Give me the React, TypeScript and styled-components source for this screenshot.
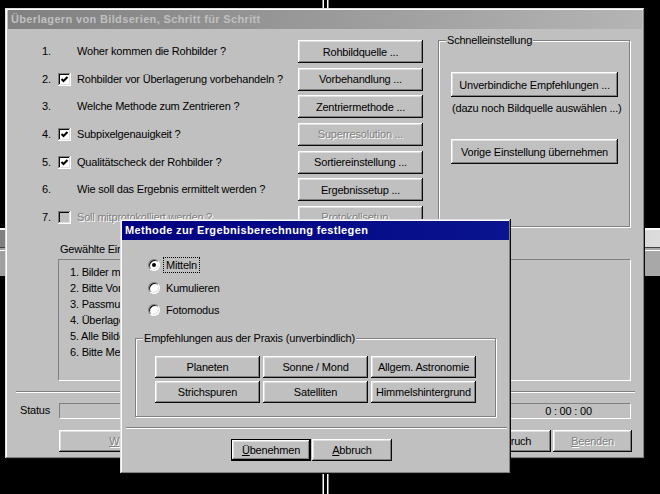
import React from "react";
import styled, { createGlobalStyle, css } from "styled-components";

const GlobalStyle = createGlobalStyle`
  body {
    margin: 0;
    background: #000;
    font-family: "Liberation Sans", Arial, sans-serif;
    font-size: 11px;
    letter-spacing: -0.2px;
    color: #000;
  }
`;

const steps = [
  { num: "1.", label: "Woher kommen die Rohbilder ?", button: "Rohbildquelle ..." },
  { num: "2.", check: true, label: "Rohbilder vor Überlagerung vorbehandeln ?", button: "Vorbehandlung ..." },
  { num: "3.", label: "Welche Methode zum Zentrieren ?", button: "Zentriermethode ..." },
  { num: "4.", check: true, label: "Subpixelgenauigkeit ?", button: "Superresolution ...", buttonOff: true },
  { num: "5.", check: true, label: "Qualitätscheck der Rohbilder ?", button: "Sortiereinstellung ..." },
  { num: "6.", label: "Wie soll das Ergebnis ermittelt werden ?", button: "Ergebnissetup ..." },
  { num: "7.", check: false, off: true, label: "Soll mitprotokolliert werden ?", button: "Protokollsetup ...", buttonOff: true },
];

const chosen = [
  "1. Bilder manuell auswählen",
  "2. Bitte Vorbehandlung festlegen",
  "3. Passmuster im ersten Bild markieren",
  "4. Überlagerung starten",
  "5. Alle Bilder werden zentriert",
  "6. Bitte Methode zur Ergebnisberechnung wählen",
];

const presets = [
  "Planeten",
  "Sonne / Mond",
  "Allgem. Astronomie",
  "Strichspuren",
  "Satelliten",
  "Himmelshintergrund",
];

const App = () => {
  return (
    <Desktop>
      <GlobalStyle />
      <BackSplit />
      <BackWindow>
        <BackTitle />
        <BackRule />
      </BackWindow>

      <MainWindow>
        <TitleBar $active={false}>Überlagern von Bildserien, Schritt für Schritt</TitleBar>
        <MainBody>
          <TopSection>
            <StepGrid>
              {steps.map((s) => (
                <React.Fragment key={s.num}>
                  <StepNum>{s.num}</StepNum>
                  <div>
                    {s.check !== undefined && (
                      <CheckBox $disabled={s.off}>
                        {s.check && (
                          <svg width="9" height="9" viewBox="0 0 9 9">
                            <polyline
                              points="1.5,4 3.5,6 7.5,2"
                              fill="none"
                              stroke="#000"
                              strokeWidth="2"
                            />
                          </svg>
                        )}
                      </CheckBox>
                    )}
                  </div>
                  <StepLabel $disabled={s.off}>{s.label}</StepLabel>
                  <Button $disabled={s.buttonOff}>{s.button}</Button>
                </React.Fragment>
              ))}
            </StepGrid>
            <QuickGroup>
              <GroupCaption>Schnelleinstellung</GroupCaption>
              <WideButton>Unverbindiche Empfehlungen ...</WideButton>
              <Hint>(dazu noch Bildquelle auswählen ...)</Hint>
              <WideButton $spaced>Vorige Einstellung übernehmen</WideButton>
            </QuickGroup>
          </TopSection>

          <ChosenLabel>Gewählte Einstellungen</ChosenLabel>
          <ChosenList>
            {chosen.map((c) => (
              <div key={c}>{c}</div>
            ))}
          </ChosenList>

          <Separator $width={619} $left={8} />

          <StatusRow>
            <StatusLabel>Status</StatusLabel>
            <SunkenField $width={441} />
            <SunkenField $width={125} $gap={6}>0 : 00 : 00</SunkenField>
          </StatusRow>

          <MainButtons>
            <Button $disabled $w={146}>
              <u>W</u>eiter &gt;&gt;
            </Button>
            <ButtonPair>
              <Button $w={79}>
                <u>A</u>bbruch
              </Button>
              <Button $disabled $w={79}>
                <u>B</u>eenden
              </Button>
            </ButtonPair>
          </MainButtons>
        </MainBody>
      </MainWindow>

      <Dialog>
        <TitleBar $active>Methode zur Ergebnisberechnung festlegen</TitleBar>
        <DialogBody>
          <RadioList>
            <RadioRow>
              <Radio $checked />
              <RadioLabel $focused>Mitteln</RadioLabel>
            </RadioRow>
            <RadioRow>
              <Radio />
              <RadioLabel>Kumulieren</RadioLabel>
            </RadioRow>
            <RadioRow>
              <Radio />
              <RadioLabel>Fotomodus</RadioLabel>
            </RadioRow>
          </RadioList>

          <PresetGroup>
            <GroupCaption>Empfehlungen aus der Praxis (unverbindlich)</GroupCaption>
            <PresetGrid>
              {presets.map((p) => (
                <Button key={p}>{p}</Button>
              ))}
            </PresetGrid>
          </PresetGroup>

          <Separator $width={381} $left={4} />

          <DialogButtons>
            <Button $default $w={80}>
              <u>Ü</u>benehmen
            </Button>
            <Button $w={80}>
              <u>A</u>bbruch
            </Button>
          </DialogButtons>
        </DialogBody>
      </Dialog>
    </Desktop>
  );
};

export default App;

const windowBevel = css`
  background: #c0c0c0;
  box-shadow: inset -1px -1px #0a0a0a, inset 1px 1px #dfdfdf,
    inset -2px -2px #808080, inset 2px 2px #ffffff;
  box-sizing: border-box;
`;

const Desktop = styled.div`
  position: relative;
  width: 660px;
  height: 494px;
  overflow: hidden;
  background: #000;
`;

const BackSplit = styled.div`
  position: absolute;
  left: 322px;
  top: 0;
  width: 8px;
  height: 494px;
  background: linear-gradient(
    90deg,
    #808080 0 1px,
    #ffffff 1px 2px,
    #000 2px 5px,
    #ffffff 5px 6px,
    #808080 6px 7px,
    #000 7px
  );
`;

const BackWindow = styled.div`
  position: absolute;
  left: 0;
  right: 0;
  top: 228px;
  height: 48px;
  border-top: 2px solid #ffffff;
  background: linear-gradient(90deg, #a0a0a0, #a8a8a8);
  box-sizing: border-box;
`;

const BackTitle = styled.div`
  height: 17px;
  background: linear-gradient(90deg, #808080, #dcdcdc);
`;

const BackRule = styled.div`
  height: 2px;
  border-top: 1px solid #404040;
  border-bottom: 1px solid #ffffff;
`;

const MainWindow = styled.div`
  ${windowBevel};
  position: absolute;
  left: 5px;
  top: 8px;
  width: 640px;
  height: 451px;
  padding: 2px 3px 3px;
`;

const Dialog = styled.div`
  ${windowBevel};
  position: absolute;
  left: 120px;
  top: 219px;
  width: 391px;
  height: 255px;
  padding: 2px;
`;

const TitleBar = styled.div<{ $active: boolean }>`
  height: 19px;
  line-height: 19px;
  padding-left: 3px;
  font-weight: bold;
  font-size: 11px;
  letter-spacing: 0.35px;
  white-space: nowrap;
  overflow: hidden;
  color: ${(p) => (p.$active ? "#ffffff" : "#c0c0c0")};
  background: ${(p) =>
    p.$active
      ? "linear-gradient(90deg, #000080, #0a148e)"
      : "linear-gradient(90deg, #808080, #b4b4b4)"};
`;

const MainBody = styled.div`
  display: flex;
  flex-direction: column;
  padding-top: 11px;
`;

const TopSection = styled.div`
  display: flex;
  align-items: flex-start;
  padding-left: 34px;
`;

const StepGrid = styled.div`
  display: grid;
  grid-template-columns: 16px 19px 221px 125px;
  grid-auto-rows: 23px;
  row-gap: 4.67px;
  align-items: center;
`;

const StepNum = styled.div`
  line-height: 13px;
`;

const StepLabel = styled.div<{ $disabled?: boolean }>`
  line-height: 13px;
  white-space: nowrap;
  color: ${(p) => (p.$disabled ? "#808080" : "#000")};
  text-shadow: ${(p) => (p.$disabled ? "1px 1px 0 #ffffff" : "none")};
`;

const CheckBox = styled.span<{ $disabled?: boolean }>`
  display: flex;
  align-items: center;
  justify-content: center;
  width: 13px;
  height: 13px;
  box-sizing: border-box;
  background: ${(p) => (p.$disabled ? "#c0c0c0" : "#ffffff")};
  box-shadow: inset -1px -1px #ffffff, inset 1px 1px #808080,
    inset -2px -2px #dfdfdf, inset 2px 2px #0a0a0a;
`;

const Button = styled.button<{ $disabled?: boolean; $default?: boolean; $w?: number }>`
  height: 100%;
  width: ${(p) => (p.$w ? `${p.$w}px` : "100%")};
  padding: 0;
  border: none;
  background: #c0c0c0;
  font-family: inherit;
  font-size: 11px;
  letter-spacing: inherit;
  white-space: nowrap;
  color: ${(p) => (p.$disabled ? "#808080" : "#000")};
  text-shadow: ${(p) => (p.$disabled ? "1px 1px 0 #ffffff" : "none")};
  box-shadow: ${(p) =>
    p.$default
      ? "inset 0 0 0 1px #000, inset -2px -2px #000, inset 2px 2px #ffffff, inset -3px -3px #808080, inset 3px 3px #dfdfdf"
      : "inset -1px -1px #0a0a0a, inset 1px 1px #ffffff, inset -2px -2px #808080, inset 2px 2px #dfdfdf"};
`;

const Group = styled.div`
  position: relative;
  box-sizing: border-box;
  border: 1px solid #808080;
  box-shadow: inset 1px 1px #ffffff, 1px 1px #ffffff;
`;

const GroupCaption = styled.span`
  position: absolute;
  top: -7px;
  left: 7px;
  padding: 0 1px;
  line-height: 13px;
  background: #c0c0c0;
  white-space: nowrap;
`;

const QuickGroup = styled(Group)`
  width: 192px;
  height: 187px;
  margin-left: 15px;
  display: flex;
  flex-direction: column;
  padding: 31px 0 0 12px;
`;

const WideButton = styled(Button)<{ $spaced?: boolean }>`
  width: 167px;
  height: 25px;
  flex: none;
  margin-top: ${(p) => (p.$spaced ? "24px" : "0")};
`;

const Hint = styled.div`
  margin-top: 5px;
  padding-left: 1px;
  line-height: 13px;
  white-space: nowrap;
`;

const ChosenLabel = styled.div`
  margin: 14px 0 0 52px;
  line-height: 13px;
`;

const ChosenList = styled.div`
  margin: 3px 0 0 50px;
  width: 573px;
  height: 122px;
  box-sizing: border-box;
  border: 1px solid;
  border-color: #808080 #ffffff #ffffff #808080;
  padding: 4px 0 0 11px;
  line-height: 16px;
  overflow: hidden;
`;

const Separator = styled.div<{ $width: number; $left: number }>`
  width: ${(p) => p.$width}px;
  margin: 10px 0 0 ${(p) => p.$left}px;
  border-top: 1px solid #808080;
  border-bottom: 1px solid #ffffff;
`;

const StatusRow = styled.div`
  display: flex;
  align-items: center;
  height: 16px;
  margin-top: 10px;
  padding-left: 12px;
`;

const StatusLabel = styled.div`
  width: 39px;
  line-height: 13px;
`;

const SunkenField = styled.div<{ $width: number; $gap?: number }>`
  width: ${(p) => p.$width}px;
  height: 16px;
  margin-left: ${(p) => p.$gap ?? 0}px;
  box-sizing: border-box;
  border: 1px solid;
  border-color: #808080 #ffffff #ffffff #808080;
  text-align: center;
  line-height: 14px;
`;

const MainButtons = styled.div`
  display: flex;
  justify-content: space-between;
  height: 22px;
  margin-top: 11px;
  padding: 0 10px 0 51px;
`;

const ButtonPair = styled.div`
  display: flex;
  gap: 2px;
`;

const DialogBody = styled.div`
  display: flex;
  flex-direction: column;
  padding-top: 17px;
`;

const RadioList = styled.div`
  display: flex;
  flex-direction: column;
  gap: 6.5px;
  margin-left: 26px;
`;

const RadioRow = styled.div`
  display: flex;
  align-items: center;
  height: 16px;
`;

const Radio = styled.span<{ $checked?: boolean }>`
  position: relative;
  width: 12px;
  height: 12px;
  box-sizing: border-box;
  border-radius: 50%;
  background: #ffffff;
  border: 1px solid;
  border-color: #808080 #ffffff #ffffff #808080;
  box-shadow: inset 1px 1px #0a0a0a, inset -1px -1px #dfdfdf;

  &::after {
    content: "";
    display: ${(p) => (p.$checked ? "block" : "none")};
    position: absolute;
    left: 3px;
    top: 3px;
    width: 4px;
    height: 4px;
    border-radius: 50%;
    background: #000;
  }
`;

const RadioLabel = styled.span<{ $focused?: boolean }>`
  margin-left: 3px;
  padding: 0 2px;
  line-height: 14px;
  border: 1px dotted ${(p) => (p.$focused ? "#000" : "transparent")};
`;

const PresetGroup = styled(Group)`
  width: 361px;
  height: 79px;
  margin: 20px 0 0 13px;
  padding: 17px 0 0 19px;
`;

const PresetGrid = styled.div`
  display: grid;
  grid-template-columns: repeat(3, 105px);
  grid-auto-rows: 22px;
  column-gap: 3px;
  row-gap: 3px;
`;

const DialogButtons = styled.div`
  display: flex;
  gap: 1px;
  height: 22px;
  margin-top: 10px;
  padding-left: 109px;
`;
